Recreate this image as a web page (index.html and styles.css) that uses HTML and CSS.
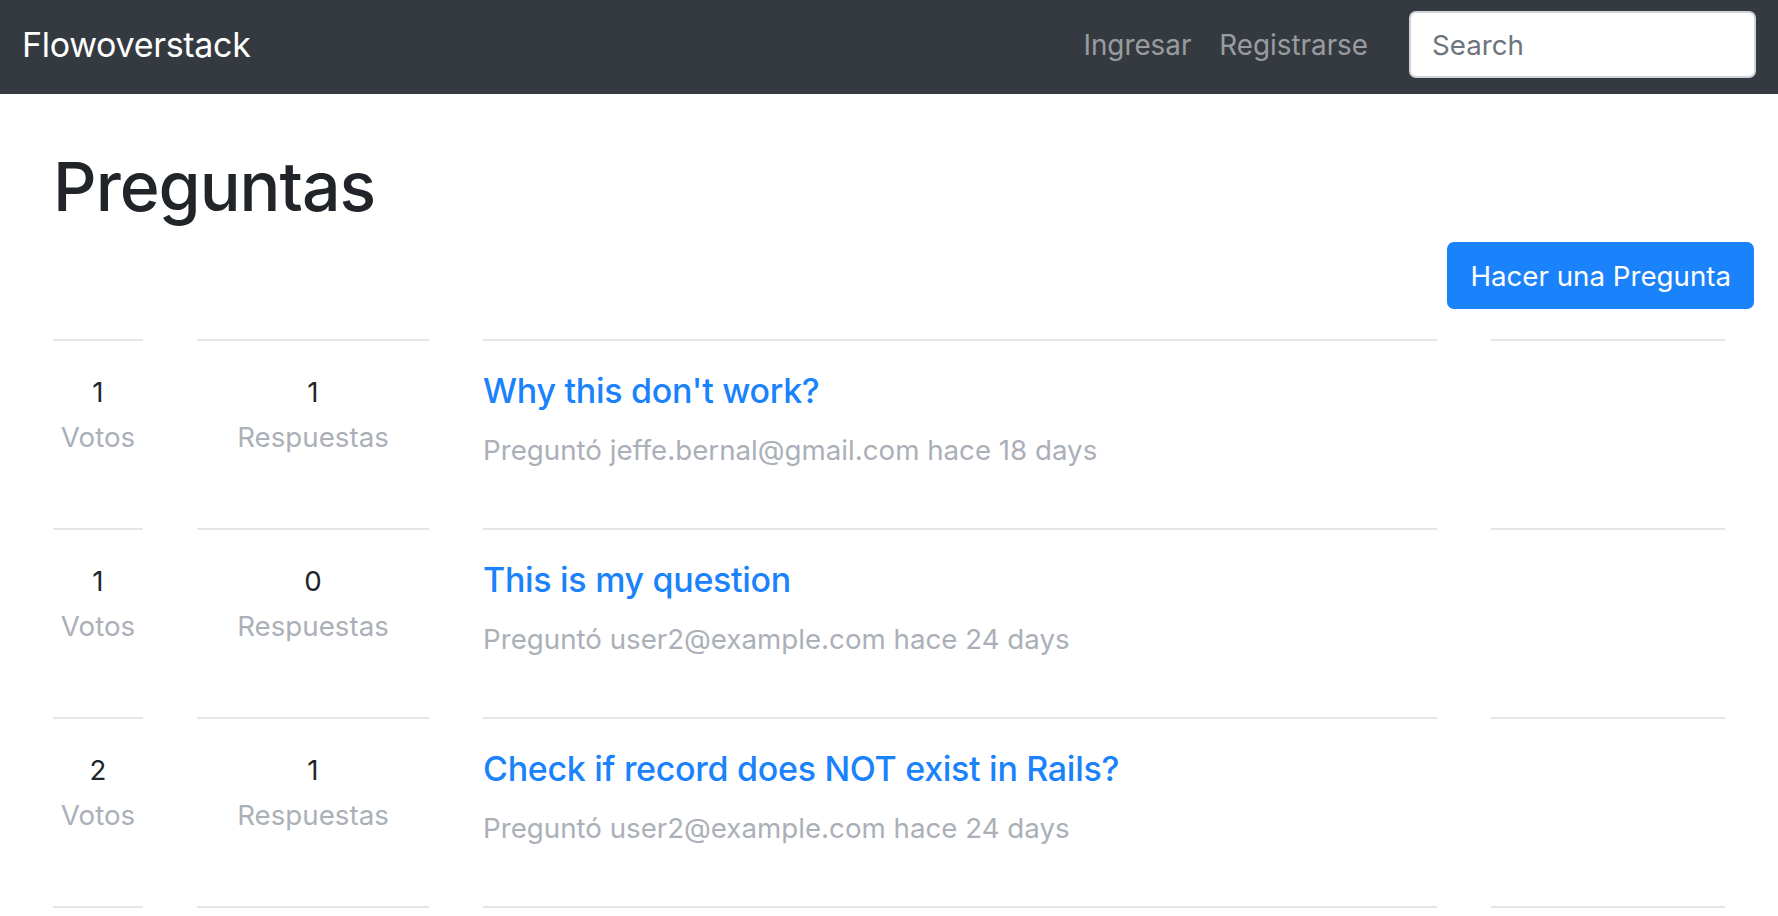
FILE: index.html
```html
<!DOCTYPE html>
<html lang="es">
<head>
<meta charset="utf-8">
<title>Flowoverstack</title>
<link rel="stylesheet" href="styles.css">
</head>
<body>
<nav class="navbar">
  <a class="brand" href="#">Flowoverstack</a>
  <div class="nav-right">
    <a class="nav-link" href="#">Ingresar</a>
    <a class="nav-link" href="#">Registrarse</a>
    <input class="search" type="text" placeholder="Search">
  </div>
</nav>
<main class="page">
  <h1 class="page-title">Preguntas</h1>
  <div class="actions">
    <a class="btn-primary" href="#">Hacer una Pregunta</a>
  </div>
  <div class="questions">
    <div class="q-row">
      <div class="cell stat"><div class="num">1</div><div class="label">Votos</div></div>
      <div class="cell stat"><div class="num">1</div><div class="label">Respuestas</div></div>
      <div class="cell main"><a class="q-title" href="#">Why this don't work?</a><div class="meta">Preguntó jeffe.bernal@gmail.com hace 18 days</div></div>
      <div class="cell"></div>
    </div>
    <div class="q-row">
      <div class="cell stat"><div class="num">1</div><div class="label">Votos</div></div>
      <div class="cell stat"><div class="num">0</div><div class="label">Respuestas</div></div>
      <div class="cell main"><a class="q-title" href="#">This is my question</a><div class="meta">Preguntó user2@example.com hace 24 days</div></div>
      <div class="cell"></div>
    </div>
    <div class="q-row">
      <div class="cell stat"><div class="num">2</div><div class="label">Votos</div></div>
      <div class="cell stat"><div class="num">1</div><div class="label">Respuestas</div></div>
      <div class="cell main"><a class="q-title" href="#">Check if record does NOT exist in Rails?</a><div class="meta">Preguntó user2@example.com hace 24 days</div></div>
      <div class="cell"></div>
    </div>
    <div class="q-row">
      <div class="cell stat"></div>
      <div class="cell stat"></div>
      <div class="cell main"></div>
      <div class="cell"></div>
    </div>
  </div>
</main>
</body>
</html>
```
FILE: styles.css
```css
* { box-sizing: border-box; }
html, body { margin: 0; padding: 0; }
body {
  font-family: Inter, "Liberation Sans", sans-serif;
  color: #212529;
  background: #fff;
  overflow: hidden;
}
a { text-decoration: none; }

.navbar {
  height: 94px;
  background: #343a40;
  display: flex;
  align-items: center;
  padding: 0 22px 0 22px;
}
.brand {
  color: #fff;
  font-size: 34px;
  line-height: 52px;
  letter-spacing: -0.3px;
  margin-bottom: 4px;
}
.nav-right {
  margin-left: auto;
  display: flex;
  align-items: center;
  margin-bottom: 5px;
}
.nav-link {
  color: rgba(255, 255, 255, 0.5);
  font-size: 27.8px;
  line-height: 42px;
  padding: 0 14px;
}
.search {
  margin-left: 27px;
  width: 347px;
  height: 67px;
  border: 2px solid #ced4da;
  border-radius: 7px;
  padding: 0 21px;
  font-family: inherit;
  font-size: 27.7px;
  color: #495057;
  background: #fff;
  outline: none;
}
.search::placeholder { color: #6c757d; opacity: 1; }

.page {
  padding: 50px 24px 0 53px;
}
.page-title {
  margin: 0 0 14px;
  font-size: 68px;
  line-height: 84px;
  font-weight: 500;
  letter-spacing: -1px;
}
.actions {
  display: flex;
  justify-content: flex-end;
  margin-bottom: 30px;
}
.btn-primary {
  display: inline-block;
  background: #1a82fb;
  color: #fff;
  border: 2px solid #1a82fb;
  border-radius: 7px;
  font-size: 27.7px;
  line-height: 42px;
  padding: 10.5px 21px;
}

.questions {
  padding-right: 29px;
}
.q-row {
  display: grid;
  grid-template-columns: 90px 232px 1fr 234px;
  column-gap: 54px;
  height: 189px;
}
.cell {
  border-top: 2px solid #e6e6e6;
  padding-top: 30px;
}
.stat {
  text-align: center;
  padding-top: 30px;
}
.num {
  font-size: 27.7px;
  line-height: 42px;
  color: #212529;
}
.label {
  margin-top: 2.5px;
  font-size: 27.7px;
  line-height: 42px;
  color: #abb0b8;
}
.q-title {
  display: block;
  color: #1a82fb;
  font-size: 34px;
  line-height: 40px;
  font-weight: 500;
  letter-spacing: -0.3px;
}
.meta {
  margin-top: 18px;
  font-size: 27.7px;
  line-height: 42px;
  color: #abb0b8;
}
```
